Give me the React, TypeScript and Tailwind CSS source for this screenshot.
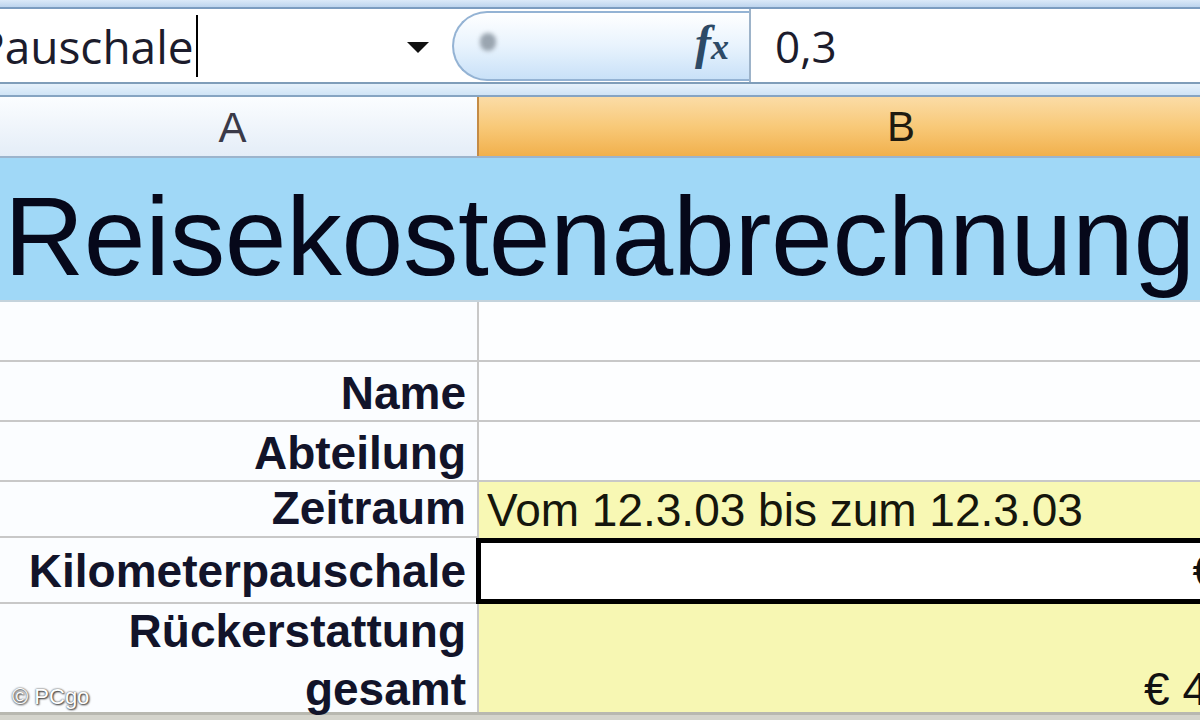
export default function App() {
  const label = "font-['Liberation_Sans',Arial,sans-serif] font-bold text-[46px] leading-[46px] text-[#12142a]";

  return (
    <div className="w-[1200px] h-[720px] overflow-hidden bg-white font-['Liberation_Sans',Arial,sans-serif]">
      {/* top strip */}
      <div className="h-[9px] bg-gradient-to-b from-[#dbe9f8] to-[#bcd4ee] border-b-2 border-[#7b9cc0]" />

      {/* name box + formula bar */}
      <div className="h-[73px] flex bg-white">
        <div className="w-[452px] flex items-center overflow-hidden">
          <span className="ml-[-23px] font-['Open_Sans',sans-serif] text-[46px] leading-none text-[#1c1c2c]">
            Pauschale
          </span>
          <span className="w-[2px] h-[62px] bg-black ml-[2px]" />
          <div className="flex-1" />
          <svg width="22" height="12" viewBox="0 0 22 12" className="mr-[23px] mt-[4px]">
            <path d="M0 0 L22 0 L11 11 Z" fill="#111" />
          </svg>
        </div>
        <div className="w-[297px] flex items-center">
          <div className="w-full h-[70px] rounded-l-[36px] border-2 border-r-0 border-[#94b3d4] bg-gradient-to-b from-[#ffffff] via-[#e8f3fd] to-[#c9e1f8] flex items-center">
            <div className="w-[16px] h-[18px] rounded-full bg-[#9aa5b0] blur-[2px] ml-[26px] mb-[8px]" />
            <div className="flex-1" />
            <span className="font-['Liberation_Serif',serif] italic font-bold text-[48px] leading-none text-[#2d4a66] mr-[20px] mb-[6px]">
              f<span className="text-[36px]">x</span>
            </span>
          </div>
        </div>
        <div className="flex-1 border-l-2 border-[#9db3c9] flex items-center">
          <span className="ml-[24px] font-['Open_Sans',sans-serif] text-[44px] leading-none text-[#1c1c2c]">0,3</span>
        </div>
      </div>

      {/* band */}
      <div className="h-[15px] border-t-2 border-[#7f9db9] bg-gradient-to-b from-[#e6f1fb] to-[#d0e4f6] border-b-2 border-b-[#86a4c2]" />

      {/* column headers */}
      <div className="h-[61px] flex border-b-2 border-[#9cb4cc]">
        <div className="w-[477px] bg-gradient-to-b from-[#fbfdff] to-[#e4edf7] flex items-center justify-center pr-[12px]">
          <span className="text-[42px] leading-none text-[#3a3a48] mt-[2px]">A</span>
        </div>
        <div className="flex-1 border-l-2 border-[#c48b45] bg-gradient-to-b from-[#fbdca6] via-[#f8c978] to-[#f1b04b] flex items-center pl-[408px]">
          <span className="text-[42px] leading-none text-[#1f1a10]">B</span>
        </div>
      </div>

      {/* title row */}
      <div className="h-[144px] bg-[#a0d8f7] border-b-2 border-[#c4d3dc] pt-[24px] pl-[4px] whitespace-nowrap">
        <span className="text-[111px] leading-[111px] tracking-[-0.3px] text-[#06081a]">Reisekostenabrechnung</span>
      </div>

      {/* data rows */}
      <div className="flex h-[60px] border-b-2 border-[#c8c8c8]">
        <div className="w-[477px] bg-[#fbfdff]" />
        <div className="flex-1 border-l-2 border-[#c8c8c8] bg-[#fdfeff]" />
      </div>

      <div className="flex h-[60px] border-b-2 border-[#c8c8c8]">
        <div className="w-[477px] bg-[#fbfdff] flex items-end justify-end pr-[11px] pb-[4px]">
          <span className={label}>Name</span>
        </div>
        <div className="flex-1 border-l-2 border-[#c8c8c8] bg-[#fdfeff]" />
      </div>

      <div className="flex h-[60px] border-b-2 border-[#c8c8c8]">
        <div className="w-[477px] bg-[#fbfdff] flex items-end justify-end pr-[11px] pb-[4px]">
          <span className={label}>Abteilung</span>
        </div>
        <div className="flex-1 border-l-2 border-[#c8c8c8] bg-[#fdfeff]" />
      </div>

      <div className="flex h-[56px]">
        <div className="w-[477px] bg-[#fbfdff] flex items-end justify-end pr-[11px] pb-[5px] border-b-2 border-[#c8c8c8]">
          <span className={label}>Zeitraum</span>
        </div>
        <div className="flex-1 border-l-2 border-[#c8c8c8] bg-[#f8f8b4] flex items-end pl-[8px] pb-[5px] whitespace-nowrap">
          <span className="text-[46px] leading-[46px] text-[#15160c]">Vom 12.3.03 bis zum 12.3.03</span>
        </div>
      </div>

      <div className="flex h-[66px]">
        <div className="w-[477px] bg-[#fbfdff] flex items-end justify-end pr-[11px] pb-[8px] border-b-2 border-[#c8c8c8]">
          <span className={label}>Kilometerpauschale</span>
        </div>
        <div className="flex-1 border-[5px] border-r-0 border-black bg-white flex items-center justify-end overflow-hidden ml-[-1px]">
          <span className="text-[46px] leading-none text-[#111] mr-[-18px]">€</span>
        </div>
      </div>

      <div className="relative flex h-[111px] border-b-[3px] border-[#b8b8b0]">
        <div className="w-[477px] bg-[#fbfdff] flex flex-col items-end justify-end gap-[12px] pr-[11px]">
          <span className={label}>Rückerstattung</span>
          <span className={label}>gesamt</span>
        </div>
        <div className="flex-1 border-l-2 border-[#c8c8c8] bg-[#f7f7b3] flex items-end justify-end overflow-hidden">
          <span className="text-[46px] leading-[46px] text-[#111] whitespace-nowrap mr-[-8px]">€ 4</span>
        </div>
        <span className="absolute left-[12px] bottom-[4px] text-[22px] leading-none text-white [text-shadow:0_0_2px_#333,1px_1px_2px_#333]">
          © PCgo
        </span>
      </div>
      <div className="h-[10px] bg-[#d4d4cc]" />
    </div>
  );
}
